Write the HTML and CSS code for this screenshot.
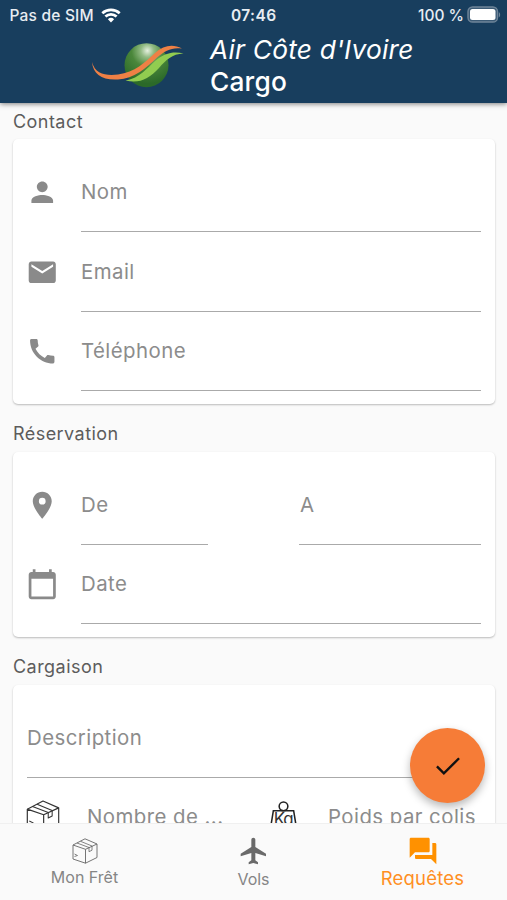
FILE: index.html
```html
<!DOCTYPE html>
<html lang="fr">
<head>
<meta charset="utf-8">
<meta name="viewport" content="width=device-width, initial-scale=1">
<title>Air Côte d'Ivoire Cargo</title>
<link rel="stylesheet" href="styles.css">
</head>
<body>
<div class="app">
  <header class="header">
    <div class="status">
      <div class="carrier"><span class="carrier-name">Pas de SIM</span>
        <svg class="wifi" viewBox="0 0 20 16"><path d="M10 15.400 6.900 12.200a4.600 4.600 0 0 1 6.200 0z" fill="#fff"/><path d="M4.400 9.600a8.200 8.200 0 0 1 11.200 0M1.300 6.300a12.800 12.800 0 0 1 17.400 0" fill="none" stroke="#fff" stroke-width="2.700"/></svg>
      </div>
      <span class="time">07:46</span>
      <div class="power"><span class="percent">100 %</span>
        <svg class="battery" viewBox="0 0 34 18"><rect x="1" y="1" width="29.500" height="15" rx="4.600" fill="#3c5b76" stroke="#6f8599" stroke-width="1.400"/><rect x="3" y="3" width="25.500" height="11" rx="2.500" fill="#fff"/><path d="M31.800 6.200c1.800.6 1.800 4.400 0 5z" fill="#6f8599"/></svg>
      </div>
    </div>
    <div class="brand">
      <svg class="logo" viewBox="0 0 96 48">
        <defs><radialGradient id="globe" cx=".52" cy=".17" r=".75"><stop offset="0" stop-color="#e5f0df"/><stop offset=".2" stop-color="#91ba83"/><stop offset=".48" stop-color="#4b873b"/><stop offset="1" stop-color="#2b6929"/></radialGradient></defs>
        <circle cx="55.500" cy="25.200" r="22" fill="url(#globe)"/>
        <path d="M34.500 40.500C49 38 56 28 64 21c9-8 19-10 28.500-7.500C81 14 75 20 68 28 58 39 48 44 34.500 40.500z" fill="#91cc50"/>
        <path d="M1 22c3 12 14 14 26 12.500 17-2 27-12.500 37-21.500 9-8 18-9 27-4.500-10-1.500-17 2-25 9C55 28 43 39 27 39.500 11 40.500 2 34 1 22z" fill="#ef8045"/>
      </svg>
      <h1 class="title"><em>Air Côte d'Ivoire</em><span>Cargo</span></h1>
    </div>
  </header>

  <main class="content">
    <section class="section">
      <h2 class="heading contact">Contact</h2>
      <div class="card">
        <div class="row">
          <svg class="icon" viewBox="0 0 24 24"><path d="M12 12c2.210 0 4-1.790 4-4s-1.790-4-4-4-4 1.790-4 4 1.790 4 4 4zm0 2c-2.670 0-8 1.340-8 4v2h16v-2c0-2.660-5.330-4-8-4z"/></svg>
          <div class="field"><span>Nom</span></div>
        </div>
        <div class="row">
          <svg class="icon" viewBox="0 0 24 24"><path d="M20 4H4c-1.100 0-1.990.9-1.990 2L2 18c0 1.100.9 2 2 2h16c1.100 0 2-.9 2-2V6c0-1.100-.9-2-2-2zm0 4-8 5-8-5V6l8 5 8-5v2z"/></svg>
          <div class="field"><span>Email</span></div>
        </div>
        <div class="row">
          <svg class="icon" viewBox="0 0 24 24"><path d="M20.010 15.380c-1.230 0-2.420-.2-3.530-.56-.35-.12-.74-.03-1.010.24l-1.570 1.970c-2.830-1.350-5.480-3.900-6.890-6.830l1.950-1.660c.27-.28.35-.67.24-1.020-.37-1.110-.56-2.300-.56-3.530 0-.54-.45-.99-.99-.99H4.190C3.650 3 3 3.240 3 3.990 3 13.280 10.730 21 20.010 21c.71 0 .99-.63.99-1.180v-3.450c0-.54-.45-.99-.99-.99z"/></svg>
          <div class="field"><span>Téléphone</span></div>
        </div>
      </div>
    </section>

    <section class="section">
      <h2 class="heading">Réservation</h2>
      <div class="card">
        <div class="row">
          <svg class="icon" viewBox="0 0 24 24"><path d="M12 2C8.130 2 5 5.130 5 9c0 5.250 7 13 7 13s7-7.750 7-13c0-3.870-3.130-7-7-7zm0 9.500a2.500 2.500 0 1 1 0-5 2.500 2.500 0 0 1 0 5z"/></svg>
          <div class="field origin"><span>De</span></div>
          <div class="field destination"><span>A</span></div>
        </div>
        <div class="row">
          <svg class="icon" viewBox="0 0 24 24"><path d="M20 3h-1V1h-2v2H7V1H5v2H4c-1.100 0-2 .9-2 2v16c0 1.100.9 2 2 2h16c1.100 0 2-.9 2-2V5c0-1.100-.9-2-2-2zm0 18H4V8h16v13z"/></svg>
          <div class="field"><span>Date</span></div>
        </div>
      </div>
    </section>

    <section class="section">
      <h2 class="heading">Cargaison</h2>
      <div class="card">
        <div class="row"><div class="field"><span>Description</span></div></div>
        <div class="row">
          <svg class="parcel" viewBox="0 0 26 26"><use href="#box"/></svg>
          <div class="field count"><span>Nombre de ...</span></div>
          <svg class="weight" viewBox="0 0 30 32"><g fill="none" stroke="#222" stroke-width="1.600"><circle cx="15" cy="5" r="4.500"/><path d="M10 9.500H4.500L1 31h28L25.500 9.500H20zH10"/></g><text class="unit" x="4.800" y="24.500">Kg</text></svg>
          <div class="field"><span>Poids par colis</span></div>
        </div>
      </div>
    </section>
  </main>

  <nav class="nav">
    <a class="tab shipment">
      <svg viewBox="0 0 26 26"><g id="box" fill="none" stroke="currentColor" stroke-linejoin="round"><path d="M1 7 13 .8 25 6v13.500L13.500 25.200 1 21zM1 7l12.500 4.300L25 6M13.500 11.300v13.900" stroke-width=".9"/><path d="M5 5l12 4.500v4.200l3-1.500V8L8.500 3.300M2.500 16l3 1.500-3 1" stroke-width=".8"/></g></svg>
      <span>Mon Frêt</span>
    </a>
    <a class="tab flights">
      <svg viewBox="0 0 24 24"><path fill="#6a6a6a" d="M21 16v-2l-8-5V3.500c0-.83-.67-1.500-1.500-1.500S10 2.670 10 3.500V9l-8 5v2l8-2.500V19l-2 1.500V22l3.500-1 3.500 1v-1.500L13 19v-5.500l8 2.500z"/></svg>
      <span>Vols</span>
    </a>
    <a class="tab requests">
      <svg viewBox="0 0 24 24"><path fill="#ff9100" d="M21 6h-2v9H6v2c0 .55.450 1 1 1h11l4 4V7c0-.55-.45-1-1-1zm-4 6V3c0-.55-.45-1-1-1H3c-.55 0-1 .45-1 1v14l4-4h10c.55 0 1-.45 1-1z"/></svg>
      <span>Requêtes</span>
    </a>
  </nav>
  <button class="fab" aria-label="Valider"><svg viewBox="0 0 24 24"><path d="m3.700 12.300 5.200 5.200L20.300 6.200" fill="none" stroke="#111" stroke-width="1.800"/></svg></button>
</div>
</body>
</html>
```

FILE: styles.css
```css
* { box-sizing: border-box; }
body { margin: 0; font-family: Inter, "Liberation Sans", sans-serif; background: #fafafa; }
h1, h2 { margin: 0; font-weight: 400; }
svg { display: block; flex: none; }
.app { position: relative; width: 507px; height: 900px; display: flex; flex-direction: column; overflow: hidden; }
.header { flex: none; height: 103px; background: #183e5e; color: #fff; box-shadow: 0 1px 5px rgba(0,0,0,.5); z-index: 1; }
.status { height: 30px; padding: 0 6px 0 9.5px; display: grid; grid-template-columns: 1fr auto 1fr; align-items: center; font-size: 15.5px; font-weight: 500; color: #e8edf2; }
.carrier, .power { display: flex; align-items: center; }
.power { justify-content: flex-end; gap: 3px; }
.carrier { gap: 7px; letter-spacing: .2px; }
.wifi { width: 20px; height: 16px; margin-top: -1px; }
.time { font-weight: 600; letter-spacing: .4px; margin-left: -3px; }
.battery { width: 34px; height: 18px; }
.brand { display: flex; padding-left: 91px; }
.logo { width: 96px; height: 48px; margin-top: 10px; }
.title { margin-left: 23px; padding-top: 4px; font-size: 26.3px; line-height: 32px; font-weight: 450; letter-spacing: .2px; }
.title em, .title span { display: block; white-space: nowrap; }
.content { flex: 1; min-height: 0; overflow: hidden; padding: 0 12px 0 13px; }
.section { margin-bottom: 12.6px; }
.heading { height: 35px; line-height: 34px; font-size: 18px; letter-spacing: .45px; color: #5c5c5c; }
.heading.contact { height: 36px; line-height: 37px; }
.card { background: #fff; border-radius: 5px; padding: 13.5px 14px 13px 14px; box-shadow: 0 1px 2px rgba(0,0,0,.26); }
.row { display: flex; align-items: center; height: 79.5px; }
.icon { width: 32.5px; height: 32.5px; margin: 0 22.5px 0 -1px; fill: #8a8a8a; }
.field { flex: 1; height: 100%; display: flex; align-items: center; border-bottom: 1px solid #aaa; font-size: 20.4px; letter-spacing: .45px; color: #8c8c8c; white-space: nowrap; }
.origin { flex: none; width: 127px; }
.destination { flex: none; width: 182px; margin-left: auto; padding-left: 1px; }
.parcel { width: 34px; height: 34px; margin-right: 27px; margin-left: -1px; color: #333; }
.count { flex: none; width: 140px; }
.weight { width: 29px; height: 32px; margin: 0 30px 0 42px; }
.unit { font-size: 17.5px; fill: #333; letter-spacing: -1px; }
.nav { flex: none; height: 77px; display: grid; grid-template-columns: repeat(3, 1fr); background: #fafafa; border-top: 1px solid #f0f0f0; z-index: 1; }
.tab { display: flex; flex-direction: column; align-items: center; color: #858585; }
.shipment svg { width: 26px; height: 26px; margin-top: 14px; color: #666; }
.shipment span { font-size: 16px; line-height: 20px; margin-top: 3px; }
.flights svg { width: 32px; height: 32px; margin-top: 11px; }
.flights span { font-size: 16px; line-height: 20px; margin-top: 2px; }
.requests { color: #ff8f1f; }
.requests svg { width: 32px; height: 32px; margin-top: 11px; }
.requests span { font-size: 18.5px; line-height: 22px; letter-spacing: .2px; }
.fab { position: absolute; left: 410px; top: 728px; width: 75px; height: 75px; border: 0; border-radius: 50%; background: #f67c37; display: grid; place-items: center; padding: 0; box-shadow: 0 4px 8px rgba(0,0,0,.28); z-index: 2; }
.fab svg { width: 32px; height: 32px; }
```
